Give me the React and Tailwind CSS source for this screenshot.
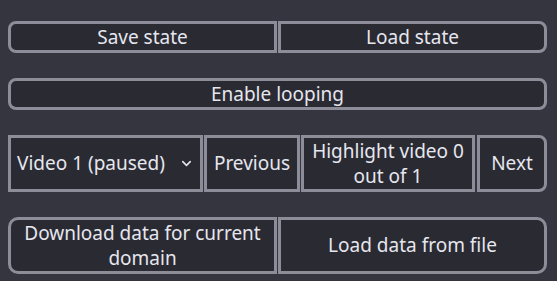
import { ChevronDown } from 'lucide-react';

const btn =
  'flex items-center justify-center text-center bg-[#2a2a33] border-[3px] border-[#8d8c99] text-[#e6e6ee] leading-[25px]';

export default function App() {
  return (
    <div
      className="w-[557px] h-[281px] bg-[#353540] pl-2 pr-[10px] pt-[21px] flex flex-col gap-[25px] text-[19px]"
      style={{ fontFamily: '"Noto Sans", sans-serif' }}
    >
      <div className="flex gap-px">
        <button className={`${btn} w-[269px] h-[32px] rounded-l-lg`}>Save state</button>
        <button className={`${btn} w-[269px] h-[32px] rounded-r-lg`}>Load state</button>
      </div>

      <button className={`${btn} w-full h-[32px] rounded-lg`}>Enable looping</button>

      <div className="flex gap-px h-[57px]">
        <div className={`${btn} w-[195px] justify-start pl-[6px] gap-[14px]`}>
          <span>Video 1 (paused)</span>
          <ChevronDown size={15} strokeWidth={2.5} />
        </div>
        <button className={`${btn} w-[96px]`}>Previous</button>
        <button className={`${btn} w-[174px] px-2`}>Highlight video 0 out of 1</button>
        <button className={`${btn} w-[70px] ml-px rounded-r-lg`}>Next</button>
      </div>

      <div className="flex gap-px h-[57px]">
        <button className={`${btn} w-[269px] rounded-l-[10px] px-3`}>
          Download data for current domain
        </button>
        <button className={`${btn} w-[269px] rounded-r-[10px]`}>Load data from file</button>
      </div>
    </div>
  );
}
